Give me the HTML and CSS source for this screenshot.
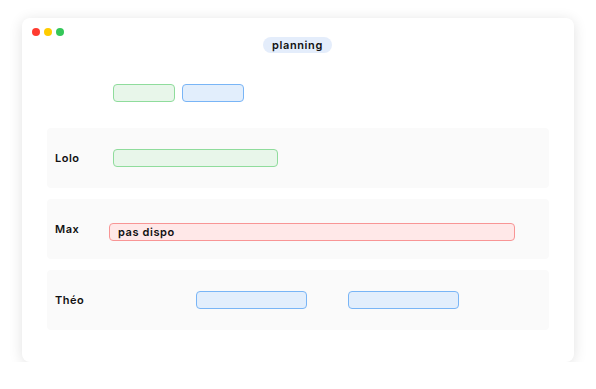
FILE: index.html
```html
<!DOCTYPE html>
<html lang="en">
<head>
    <meta charset="UTF-8">
    <meta name="viewport" content="width=device-width, initial-scale=1.0">
    <title>Planning</title>
    <link rel="stylesheet" href="styles.css">
</head>
<body>

    <div class="window">
        <div class="titlebar">
            <div class="dots">
                <span class="dot red"></span>
                <span class="dot yellow"></span>
                <span class="dot green"></span>
            </div>
            <div class="title">planning</div>
        </div>

        <div class="rows">
            <div class="row header">
                <div class="name"></div>
                <div class="track">
                    <div class="bar green" style="left: 4px; width: 62px;"></div>
                    <div class="bar blue" style="left: 73px; width: 62px;"></div>
                </div>
            </div>
            <div class="row">
                <div class="name">Lolo</div>
                <div class="track">
                    <div class="bar green" style="left: 4px; width: 165px;"></div>
                </div>
            </div>
            <div class="row">
                <div class="name">Max</div>
                <div class="track">
                    <div class="bar red" style="left: 0; width: 406px; top: 24px;">pas dispo</div>
                </div>
            </div>
            <div class="row">
                <div class="name">Théo</div>
                <div class="track">
                    <div class="bar blue" style="left: 87px; width: 111px;"></div>
                    <div class="bar blue" style="left: 239px; width: 111px;"></div>
                </div>
            </div>
        </div>
    </div>

</body>
</html>
```

FILE: styles.css
```css
body {
    margin: 0;
    background-color: #fff;
    font-family: Inter, "Noto Sans", sans-serif;
    color: #111;
}

.window {
    margin: 18px 0 0 22px;
    width: 552px;
    height: 344px;
    box-sizing: border-box;
    padding: 10px 25px 32px 25px;
    background-color: #fff;
    border-radius: 8px;
    box-shadow: 0 2px 14px rgba(0, 0, 0, 0.12);
}

.titlebar {
    position: relative;
    height: 25px;
}

.dots {
    position: absolute;
    left: -15px;
    top: 0;
    display: flex;
    gap: 4px;
}

.dot {
    width: 8px;
    height: 8px;
    border-radius: 50%;
}

.dot.red { background-color: #ff3b30; }
.dot.yellow { background-color: #ffcc00; }
.dot.green { background-color: #34c759; }

.title {
    position: absolute;
    left: 216px;
    top: 9px;
    width: 69px;
    height: 16px;
    line-height: 16px;
    border-radius: 8px;
    background-color: #e4edfb;
    text-align: center;
    font-size: 11px;
    font-weight: 600;
    letter-spacing: 0.6px;
}

.rows {
    display: flex;
    flex-direction: column;
    gap: 11px;
    margin-top: 10px;
}

.row {
    display: flex;
    align-items: center;
    height: 60px;
    border-radius: 4px;
    background-color: #fafafa;
}

.row.header {
    background-color: transparent;
    margin-bottom: -6px;
}

.name {
    width: 62px;
    box-sizing: border-box;
    padding-left: 8px;
    font-size: 11px;
    font-weight: 600;
    letter-spacing: 0.5px;
}

.track {
    position: relative;
    flex: 1;
    height: 60px;
}

.bar {
    position: absolute;
    top: 21px;
    height: 18px;
    box-sizing: border-box;
    border: 1px solid;
    border-radius: 4px;
    padding-left: 8px;
    font-size: 11px;
    font-weight: 600;
    line-height: 16px;
    letter-spacing: 0.6px;
}

.bar.green {
    background-color: #e8f6ea;
    border-color: #8fdc9c;
}

.bar.blue {
    background-color: #e2eefc;
    border-color: #79b5f6;
}

.bar.red {
    background-color: #ffe8e8;
    border-color: #f89595;
}
```
